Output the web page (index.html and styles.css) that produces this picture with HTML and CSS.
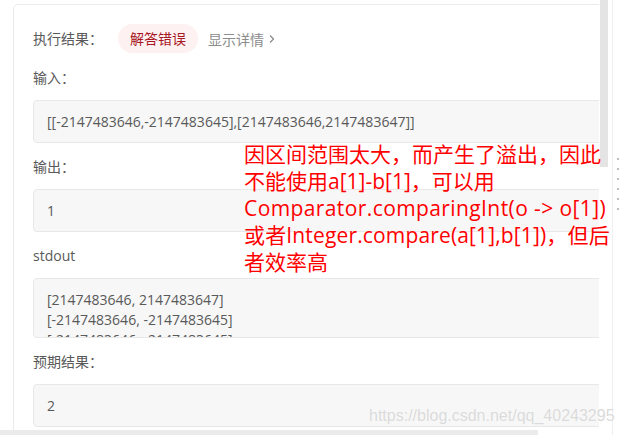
FILE: index.html
```html
<!DOCTYPE html>
<html lang="zh-CN">
<head>
<meta charset="utf-8">
<title>执行结果</title>
<link rel="stylesheet" href="styles.css">
</head>
<body>
<div class="app">
  <div class="main">
    <div class="top">
      <div class="viewport">
        <div class="card">
          <div class="result-row">
            <span class="row-label">执行结果：</span>
            <span class="badge">解答错误</span>
            <span class="detail">显示详情<svg class="chev" width="6" height="10" viewBox="0 0 6 10"><path d="M1 1.5 L4.5 5 L1 8.5" fill="none" stroke="#8c8c8c" stroke-width="1.3"/></svg></span>
          </div>
          <div class="label first">输入：</div>
          <div class="box">[[-2147483646,-2147483645],[2147483646,2147483647]]</div>
          <div class="label">输出：</div>
          <div class="box">1</div>
          <div class="label">stdout</div>
          <div class="box stdout">
            <div>[2147483646, 2147483647]</div>
            <div>[-2147483646, -2147483645]</div>
            <div>[-2147483646, -2147483645]</div>
          </div>
          <div class="label">预期结果：</div>
          <div class="box">2</div>
        </div>
      </div>
      <div class="vbar"><div class="vthumb"></div></div>
    </div>
    <div class="hbar"><div class="hthumb"></div></div>
  </div>
  <div class="side">
    <div class="grip"><i></i><i></i><i></i><i></i><i></i><i></i></div>
  </div>
  <div class="note">
    <span class="line">因区间范围太大，而产生了溢出，因此</span>
    <span class="line">不能使用a[1]-b[1]，可以用</span>
    <span class="line wide">Comparator.comparingInt(o -&gt; o[1])</span>
    <span class="line mid">或者Integer.compare(a[1],b[1])，但后</span>
    <span class="line">者效率高</span>
  </div>
  <div class="watermark">https://blog.csdn.net/qq_40243295</div>
</div>
</body>
</html>
```

FILE: styles.css
```css
* { box-sizing: border-box; }
html, body { margin: 0; padding: 0; background: #fff; }
body {
  font-family: "Open Sans", "Noto Sans CJK SC", sans-serif;
  font-size: 14px;
  color: #595959;
}
.app {
  position: relative;
  width: 622px;
  height: 435px;
  display: flex;
  overflow: hidden;
}
.main {
  width: 608px;
  display: flex;
  flex-direction: column;
}
.top {
  display: flex;
  height: 430px;
}
.viewport {
  width: 599px;
  height: 430px;
  overflow: hidden;
  margin-right: 1px;
}
.card {
  margin: 4px 0 0 13px;
  width: 640px;
  min-height: 460px;
  border: 1px solid #ebebeb;
  border-radius: 5px 0 0 0;
  padding: 19px 0 0 19px;
  background: #fff;
}
.result-row {
  display: flex;
  align-items: center;
  height: 29px;
}
.row-label { width: 85px; line-height: 22px; }
.badge {
  height: 29px;
  line-height: 29px;
  padding: 0 12px;
  border-radius: 15px;
  background: #fdf1f1;
  color: #a8171f;
}
.detail {
  margin-left: 10px;
  color: #8c8c8c;
  display: flex;
  align-items: center;
  gap: 5px;
}
.label {
  line-height: 22px;
  margin: 13px 0 11px;
}
.label.first { margin-top: 14px; }
.box {
  width: 600px;
  background: #f7f7f7;
  border: 1px solid #e8e8e8;
  border-radius: 4px;
  padding: 10px 13px;
  line-height: 21px;
}
.stdout {
  height: 60px;
  overflow: hidden;
  padding-top: 11px;
  line-height: 20px;
}
.vbar {
  width: 8px;
  height: 430px;
}
.vthumb {
  width: 8px;
  height: 167px;
  background: #e4e4e4;
}
.hbar {
  height: 5px;
}
.hthumb {
  width: 538px;
  height: 5px;
  background: #ebebeb;
}
.side {
  flex: 1;
  margin-left: 4px;
  border-left: 1px solid #efefef;
  display: flex;
  padding-top: 158px;
}
.grip {
  margin-left: 4px;
  display: flex;
  flex-direction: column;
  gap: 8px;
}
.grip i {
  display: block;
  width: 2px;
  height: 2px;
  background: #bdbdbd;
}
.note {
  position: absolute;
  left: 244px;
  top: 141px;
  color: #ff0000;
  font-family: "Open Sans", "Noto Sans CJK SC", sans-serif;
  font-size: 21px;
  line-height: 27px;
  white-space: nowrap;
}
.note .line { display: block; }
.note .wide { letter-spacing: 0.4px; }
.note .mid { letter-spacing: 0.15px; }
.watermark {
  position: absolute;
  left: 369px;
  top: 406px;
  font-family: "Liberation Sans", Arial, sans-serif;
  font-size: 16px;
  line-height: 20px;
  color: #dadada;
  text-shadow: 0 0 1px #fff;
  white-space: nowrap;
}
```
